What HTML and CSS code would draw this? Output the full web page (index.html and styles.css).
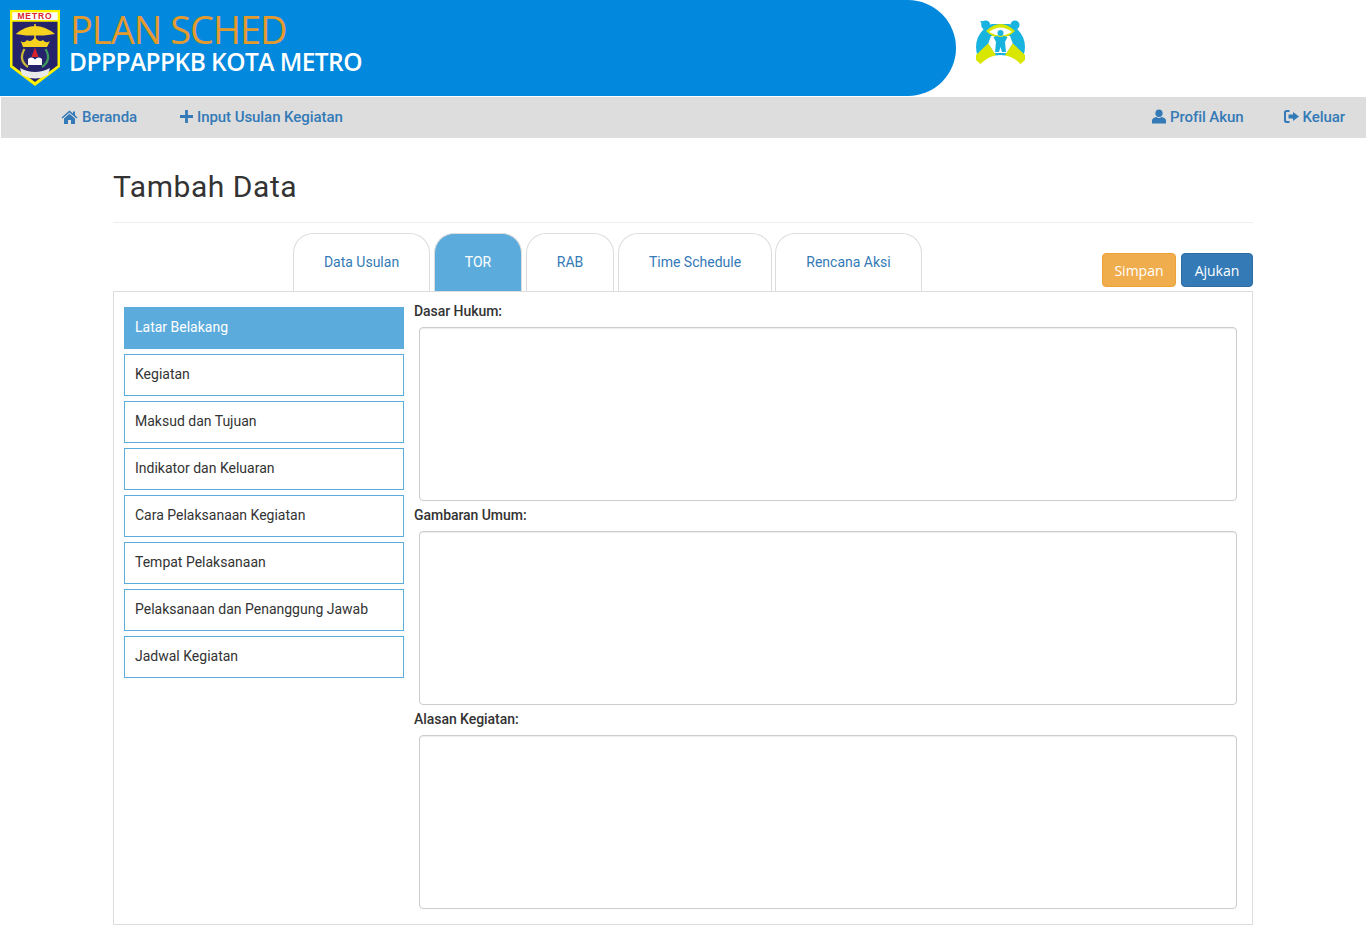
FILE: index.html
```html
<!DOCTYPE html>
<html lang="id">
<head>
<meta charset="utf-8">
<title>Plan Sched</title>
<link rel="stylesheet" href="styles.css">
</head>
<body>
<header class="top">
  <div class="banner">
    <svg class="crest" viewBox="0 0 50 76" width="50" height="76" aria-hidden="true">
      <path d="M0 0H50V57L25 76L0 57Z" fill="#fff200"/>
      <rect x="2.300" y="2.300" width="45.400" height="7.700" fill="#fff"/>
      <text x="25" y="9" text-anchor="middle" class="crest-text">METRO</text>
      <path d="M2.500 11.700H47.500V55.500L25 72L2.500 55.500Z" fill="#25246b"/>
      <path d="M5.700 24Q25 8 45 24L34 25.500H16Z" fill="#f4d21f"/>
      <rect x="24.200" y="14" width="1.600" height="22" fill="#f4d21f"/>
      <path d="M10.700 31Q14 34 17 30Q21 33 25 27Q29 33 33 30Q36 34 40 31L37 37H13Z" fill="#f4d21f"/>
      <path d="M14.500 39Q8 50 18 57" fill="none" stroke="#c9b93a" stroke-width="2.200"/>
      <path d="M35.500 39Q42 50 32 57" fill="none" stroke="#3f9a5b" stroke-width="2.200"/>
      <path d="M25 37.500L28.500 47H21.500Z" fill="#d8232a"/>
      <path d="M18 49Q22 46 25 49.500Q28 46 32 49V55H18Z" fill="#fff"/>
      <path d="M10 58Q25 66 40 58L38 65Q25 72 12 65Z" fill="#e9e9e9"/>
    </svg>
    <div class="brand">
      <div class="brand-title">PLAN SCHED</div>
      <div class="brand-sub">DPPPAPPKB KOTA METRO</div>
    </div>
  </div>
  <svg class="family" viewBox="0 0 50 48" width="50" height="48" aria-hidden="true">
    <circle cx="24.500" cy="29" r="24.500" fill="#19b3e0"/>
    <path d="M12.300 25.300L0 37V42L6 47.500L20 37ZM36.700 25.300L49 37V42L43 47.500L29 37Z" fill="#d8e600"/>
    <circle cx="24.500" cy="63.500" r="26.500" fill="#fff"/>
    <rect x="0" y="0" width="49" height="6" fill="#fff"/>
    <path d="M12.300 25.300L18.500 35H30.500L36.700 25.300L34 18H15Z" fill="#fff"/>
    <circle cx="9.700" cy="7" r="4.500" fill="#19b3e0"/>
    <circle cx="39" cy="7" r="4.500" fill="#19b3e0"/>
    <path d="M4 3L10 3.500L8 9Z" fill="#19b3e0"/>
    <path d="M10 13Q24.500 -1 39 13Q24.500 27 10 13Z" fill="#d8e600"/>
    <path d="M13 14Q24.500 5 36 14Q24.500 21 13 14Z" fill="#fff"/>
    <circle cx="24.500" cy="15" r="3" fill="#19b3e0"/>
    <path d="M17.500 19L21 18Q24.500 20 28 18L31.500 19L29 24L30 34H26L24.500 29L23 34H19L20 24Z" fill="#19b3e0"/>
  </svg>
</header>

<nav class="menu">
  <div class="menu-group">
    <a class="menu-link" href="#">
      <svg class="ico" viewBox="0 0 16 14" width="17" height="14" aria-hidden="true"><path d="M8 .5L11.500 3.500V1.500H13.500V5.200L16 7.400L15 8.500L8 2.500L1 8.500L0 7.400ZM8 3.800L13.500 8.500V14H9.500V10H6.500V14H2.500V8.500Z"/></svg>Beranda</a>
    <a class="menu-link" href="#">
      <svg class="ico" viewBox="0 0 14 14" width="13" height="13" aria-hidden="true"><path d="M5.500 0H8.500V5.500H14V8.500H8.500V14H5.500V8.500H0V5.500H5.500Z"/></svg>Input Usulan Kegiatan</a>
  </div>
  <div class="menu-group">
    <a class="menu-link" href="#">
      <svg class="ico" viewBox="0 0 14 14" width="14" height="15" aria-hidden="true"><ellipse cx="7" cy="3.800" rx="3.600" ry="3.800"/><path d="M0 14V11C0 9 2 8 4.500 7.500Q7 9.500 9.500 7.500C12 8 14 9 14 11V14Z"/></svg>Profil Akun</a>
    <a class="menu-link" href="#">
      <svg class="ico" viewBox="0 0 15 13" width="15" height="13" aria-hidden="true"><path d="M5.500 0V2H2.800Q2 2 2 2.800V10.200Q2 11 2.800 11H5.500V13H2.500Q0 13 0 10.500V2.500Q0 0 2.500 0ZM9 2L15 6.500L9 11V8.500H4.500V4.500H9Z"/></svg>Keluar</a>
  </div>
</nav>

<main class="page">
  <h1 class="page-title">Tambah Data</h1>
  <div class="tabbar">
    <ul class="tabs">
      <li class="tab tab-usulan">Data Usulan</li>
      <li class="tab tab-active tab-tor">TOR</li>
      <li class="tab tab-rab">RAB</li>
      <li class="tab tab-time">Time Schedule</li>
      <li class="tab tab-aksi">Rencana Aksi</li>
    </ul>
    <div class="actions">
      <button class="btn btn-warn" type="button">Simpan</button>
      <button class="btn btn-main" type="button">Ajukan</button>
    </div>
  </div>
  <section class="panel">
    <ul class="side">
      <li class="side-item side-active">Latar Belakang</li>
      <li class="side-item">Kegiatan</li>
      <li class="side-item">Maksud dan Tujuan</li>
      <li class="side-item">Indikator dan Keluaran</li>
      <li class="side-item">Cara Pelaksanaan Kegiatan</li>
      <li class="side-item">Tempat Pelaksanaan</li>
      <li class="side-item">Pelaksanaan dan Penanggung Jawab</li>
      <li class="side-item">Jadwal Kegiatan</li>
    </ul>
    <div class="fields">
      <label class="field-label">Dasar Hukum:</label>
      <textarea class="field-input"></textarea>
      <label class="field-label">Gambaran Umum:</label>
      <textarea class="field-input"></textarea>
      <label class="field-label">Alasan Kegiatan:</label>
      <textarea class="field-input"></textarea>
    </div>
  </section>
</main>
</body>
</html>
```

FILE: styles.css
```css
* { box-sizing: border-box; }
html, body { margin: 0; padding: 0; }
body {
  font-family: Roboto, "Liberation Sans", sans-serif;
  font-size: 14px;
  line-height: 20px;
  color: #333;
  background: #fff;
}
.top { display: flex; align-items: flex-start; height: 96px; }
.banner {
  width: 956px;
  height: 96px;
  background: #0288dc;
  border-radius: 0 48px 48px 0;
  display: flex;
  padding: 10px 0 0 10px;
}
.crest { flex: none; }
.crest-text {
  font-family: "Liberation Sans", sans-serif;
  font-size: 8.500px;
  font-weight: 700;
  letter-spacing: .9px;
  fill: #d8232a;
}
.brand { margin-left: 9px; margin-top: -2px; }
.brand-title {
  font-family: "Open Sans", sans-serif;
  font-size: 38px;
  line-height: 42px;
  padding-left: 1px;
  color: #e59a2e;
  letter-spacing: -1px;
}
.brand-sub {
  font-family: "Open Sans", sans-serif;
  font-size: 24.500px;
  line-height: 23px;
  font-weight: 600;
  color: #fff;
  letter-spacing: -.55px;
}
.family { margin: 18px 0 0 20px; flex: none; }
.menu {
  margin: 1px 0 0 1px;
  height: 41px;
  background: #ddd;
  display: flex;
  justify-content: space-between;
  padding: 0 21px 2px 60px;
}
.menu-group { display: flex; gap: 43px; }
.menu-group + .menu-group { gap: 40px; }
.menu-link {
  display: flex;
  align-items: center;
  gap: 4px;
  font-size: 15px;
  font-weight: 500;
  letter-spacing: -.07px;
  color: #337ab7;
  text-decoration: none;
}
.ico { fill: #337ab7; flex: none; }
.page { width: 1140px; margin: 0 auto; }
.page-title {
  margin: 0;
  height: 85px;
  padding: 31px 0 0;
  font-size: 30px;
  line-height: 36px;
  font-weight: 400;
  letter-spacing: .55px;
  border-bottom: 1px solid #eee;
  color: #333;
}
.tabbar { display: flex; justify-content: flex-end; align-items: flex-start; height: 68px; position: relative; padding-top: 30px; }
.tabs {
  list-style: none;
  margin: 0;
  padding: 0;
  position: absolute;
  left: 180px;
  top: 10px;
  display: flex;
  gap: 4px;
}
.tab {
  height: 58px;
  padding-top: 18px;
  text-align: center;
  color: #337ab7;
  border: 1px solid #ddd;
  border-bottom: 0;
  border-radius: 20px 20px 0 0;
  background: #fff;
}
.tab-usulan { width: 137px; }
.tab-tor { width: 88px; }
.tab-rab { width: 88px; }
.tab-time { width: 154px; }
.tab-aksi { width: 147px; margin-left: -1px; }
.tab-active { background: #5bacdc; color: #fff; }
.actions { display: flex; gap: 5px; }
.btn {
  height: 34px;
  border: 1px solid transparent;
  border-radius: 4px;
  font-family: "Open Sans", sans-serif;
  font-size: 14px;
  color: #fff;
  padding: 0;
}
.btn-warn { width: 74px; background: #f0ad4e; border-color: #eea236; }
.btn-main { width: 72px; background: #337ab7; border-color: #2e6da4; }
.panel {
  height: 634px;
  border: 1px solid #ddd;
  display: flex;
  padding: 15px 15px 0 10px;
}
.side {
  list-style: none;
  margin: 0;
  padding: 0;
  width: 280px;
  flex: none;
  display: flex;
  flex-direction: column;
  gap: 5px;
}
.side-item {
  height: 42px;
  line-height: 38px;
  padding: 0 10px;
  border: 1px solid #5bacdc;
  color: #333;
}
.side-active { background: #5bacdc; color: #fff; }
.fields { flex: 1; margin-left: 10px; margin-top: -6px; }
.field-label { display: block; height: 26px; font-weight: 500; letter-spacing: -.05px; }
.field-input {
  display: block;
  width: 818px;
  height: 174px;
  margin: 0 0 4px 5px;
  border: 1px solid #ccc;
  border-radius: 4px;
  box-shadow: inset 0 1px 1px rgba(0,0,0,.075);
  resize: none;
  background: #fff;
}
```
